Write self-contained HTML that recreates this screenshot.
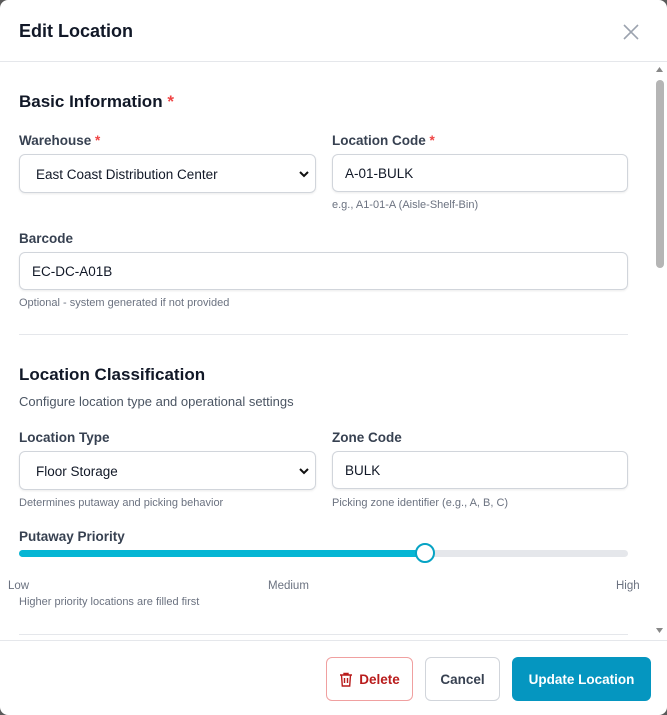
<!DOCTYPE html>
<html><head><style>
html,body{margin:0;padding:0;background:#5a5a5a;}
body{width:667px;height:715px;overflow:hidden;font-family:"Liberation Sans",sans-serif;color:#1f2937;}
.modal{position:absolute;left:0;top:0;width:667px;height:715px;background:#fff;border-radius:8px;overflow:hidden;}
.hdr{height:61px;border-bottom:1px solid #e5e7eb;position:relative;}
.hdr h2{margin:0;position:absolute;left:19px;top:21px;font-size:18px;font-weight:bold;color:#111827;}
.x{position:absolute;left:622px;top:23px;}
.body{position:absolute;top:62px;left:0;width:653px;height:578px;overflow:hidden;}
.sb{position:absolute;top:62px;left:653px;width:14px;height:578px;background:#fff;}
.thumb{position:absolute;left:656px;top:80px;width:8px;height:188px;background:#b5b5b5;border-radius:4px;}
.abs{position:absolute;}
h3{margin:0;font-size:17px;font-weight:bold;color:#111827;}
.lbl{font-size:13.5px;font-weight:bold;color:#374151;}
.req{color:#ef4444;}
.inp{position:absolute;height:36px;border:1px solid #d1d5db;border-radius:6px;box-shadow:0 1px 2px rgba(0,0,0,.08);font-size:13.5px;color:#111827;box-sizing:border-box;padding:10px 12px;}
.hint{font-size:11px;color:#6b7280;}
.ft{position:absolute;top:640px;left:0;width:667px;height:75px;border-top:1px solid #e5e7eb;}
.btn{position:absolute;top:16px;height:44px;border-radius:6px;box-sizing:border-box;font-size:13.5px;font-weight:bold;display:flex;align-items:center;justify-content:center;}
</style></head><body>
<div class="modal">
<div class="hdr"><h2>Edit Location</h2>
<svg class="x" width="18" height="18" viewBox="0 0 18 18"><path d="M2 2L16 16M16 2L2 16" stroke="#9ca3af" stroke-width="1.6"/></svg></div>
<div class="body">
<h3 class="abs" style="left:19px;top:30px">Basic Information <span class="req">*</span></h3>
<div class="abs lbl" style="left:19px;top:71px">Warehouse <span class="req">*</span></div>
<div class="abs lbl" style="left:332px;top:71px">Location Code <span class="req">*</span></div>
<div class="inp" style="left:19px;top:92px;width:297px;height:39px;padding:12px 16px">East Coast Distribution Center<svg style="position:absolute;right:6px;top:15px" width="10" height="8" viewBox="0 0 10 8"><path d="M1 2L5 6L9 2" stroke="#111" stroke-width="2" fill="none"/></svg></div>
<div class="inp" style="left:332px;top:92px;width:296px;height:38px;padding:11px 12px">A-01-BULK</div>
<div class="abs hint" style="left:332px;top:137px">e.g., A1-01-A (Aisle-Shelf-Bin)</div>
<div class="abs lbl" style="left:19px;top:169px">Barcode</div>
<div class="inp" style="left:19px;top:190px;width:609px;height:38px;padding:11px 12px">EC-DC-A01B</div>
<div class="abs hint" style="left:19px;top:235px">Optional - system generated if not provided</div>
<div class="abs" style="left:19px;top:272px;width:609px;height:1px;background:#e5e7eb"></div>
<h3 class="abs" style="left:19px;top:303px">Location Classification</h3>
<div class="abs" style="left:19px;top:332px;font-size:13px;color:#4b5563">Configure location type and operational settings</div>
<div class="abs lbl" style="left:19px;top:368px">Location Type</div>
<div class="abs lbl" style="left:332px;top:368px">Zone Code</div>
<div class="inp" style="left:19px;top:389px;width:297px;height:39px;padding:12px 16px">Floor Storage<svg style="position:absolute;right:6px;top:15px" width="10" height="8" viewBox="0 0 10 8"><path d="M1 2L5 6L9 2" stroke="#111" stroke-width="2" fill="none"/></svg></div>
<div class="inp" style="left:332px;top:389px;width:296px;height:38px;padding:11px 12px">BULK</div>
<div class="abs hint" style="left:19px;top:435px">Determines putaway and picking behavior</div>
<div class="abs hint" style="left:332px;top:435px">Picking zone identifier (e.g., A, B, C)</div>
<div class="abs lbl" style="left:19px;top:467px">Putaway Priority</div>
<div class="abs" style="left:19px;top:488px;width:609px;height:7px;background:#e5e7eb;border-radius:4px"></div>
<div class="abs" style="left:19px;top:488px;width:406px;height:7px;background:#06b6d4;border-radius:4px"></div>
<div class="abs" style="left:415px;top:481px;width:16px;height:16px;border:2px solid #06a3c4;background:#fff;border-radius:50%"></div>
<div class="abs hint" style="left:8px;top:518px;font-size:11.5px">Low</div>
<div class="abs hint" style="left:268px;top:518px;font-size:11.5px">Medium</div>
<div class="abs hint" style="left:616px;top:518px;font-size:11.5px">High</div>
<div class="abs hint" style="left:19px;top:534px">Higher priority locations are filled first</div>
<div class="abs" style="left:19px;top:572px;width:609px;height:1px;background:#e5e7eb"></div>
</div>
<div class="sb"></div><div class="thumb"></div>
<svg class="abs" style="left:655px;top:66px" width="9" height="7"><path d="M1 6L4.5 1L8 6Z" fill="#888"/></svg>
<svg class="abs" style="left:655px;top:627px" width="9" height="7"><path d="M1 1L4.5 6L8 1Z" fill="#888"/></svg>
<div class="ft">
<div class="btn" style="left:326px;width:87px;border:1px solid #f0a0a0;color:#b91c1c"><svg width="14" height="15" viewBox="0 0 14 15" style="margin-right:6px"><path d="M1 3H13M5 3V1.5H9V3M2.5 3L3.3 14H10.7L11.5 3M5.5 6V11M8.5 6V11" stroke="#b91c1c" stroke-width="1.4" fill="none"/></svg>Delete</div>
<div class="btn" style="left:425px;width:75px;border:1px solid #d1d5db;color:#374151;font-weight:bold">Cancel</div>
<div class="btn" style="left:512px;width:139px;background:#0596c0;color:#fff">Update Location</div>
</div>
</div>
</body></html>
